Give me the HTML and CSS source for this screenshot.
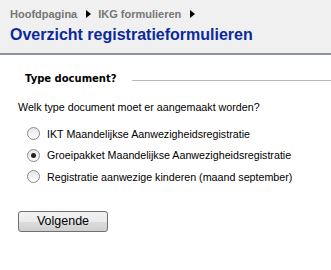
FILE: index.html
```
<!DOCTYPE html>
<html lang="nl">
<head>
    <meta charset="UTF-8">
    <title>Overzicht registratieformulieren</title>
    <link rel="stylesheet" href="styles.css">
</head>
<body>

    <div class="page-header">
        <div class="breadcrumb">
            <a href="#">Hoofdpagina</a>
            <span class="crumb-arrow"></span>
            <a href="#">IKG formulieren</a>
            <span class="crumb-arrow"></span>
        </div>
        <h1 class="page-title">Overzicht registratieformulieren</h1>
    </div>

    <form class="doc-form">
        <div class="section-head">
            <span class="section-title">Type document?</span>
            <span class="section-line"></span>
        </div>

        <p class="question">Welk type document moet er aangemaakt worden?</p>

        <ul class="choice-list">
            <li class="choice">
                <span class="radio"></span>
                <span class="choice-label">IKT Maandelijkse Aanwezigheidsregistratie</span>
            </li>
            <li class="choice">
                <span class="radio checked"></span>
                <span class="choice-label">Groeipakket Maandelijkse Aanwezigheidsregistratie</span>
            </li>
            <li class="choice">
                <span class="radio"></span>
                <span class="choice-label">Registratie aanwezige kinderen (maand september)</span>
            </li>
        </ul>

        <button type="button" class="btn-next">Volgende</button>
    </form>

</body>
</html>
```

FILE: styles.css
```
:root {
    --color-title: #0b2a9c;
    --color-crumb: #777;
    --color-text: #000;
    --font-bold: "DejaVu Sans", Verdana, sans-serif;
    --font-text: "Liberation Sans", Arial, sans-serif;
}

body {
    margin: 0;
    background-color: #fff;
    font-family: var(--font-text);
    color: var(--color-text);
}

/* --- kop --- */
.page-header {
    background-color: #f0f0f0;
    border-bottom: 2px solid #8d939c;
    padding: 7px 10px 9px;
    height: 37px;
}

.breadcrumb {
    display: flex;
    align-items: center;
    font-size: 11px;
    font-weight: bold;
    line-height: 14px;
}

.breadcrumb a {
    color: var(--color-crumb);
    text-decoration: none;
}

.crumb-arrow {
    width: 0;
    height: 0;
    border-top: 4px solid transparent;
    border-bottom: 4px solid transparent;
    border-left: 5px solid #000;
    margin: 0 7px 0 9px;
}

.page-title {
    margin: 4px 0 0;
    font-size: 16px;
    line-height: 20px;
    font-weight: bold;
    color: var(--color-title);
}

/* --- formulier --- */
.doc-form {
    padding: 17px 0 0 18px;
}

.section-head {
    display: flex;
    align-items: center;
    padding-left: 7px;
}

.section-title {
    font-family: var(--font-bold);
    font-size: 10px;
    font-weight: bold;
    line-height: 14px;
}

.section-line {
    flex: 1;
    height: 1px;
    background-color: #b4b9bf;
    margin-left: 15px;
    margin-top: 2px;
}

.question {
    margin: 14px 0 0;
    font-size: 10.7px;
    line-height: 14px;
}

.choice-list {
    list-style: none;
    margin: 9px 0 0;
    padding: 0 0 0 9px;
}

.choice {
    display: flex;
    align-items: center;
    height: 21.5px;
    font-size: 10.7px;
}

.radio {
    width: 11px;
    height: 11px;
    border: 1px solid #8a8a8a;
    border-radius: 50%;
    background: linear-gradient(#e6e6e6, #fff);
    margin-right: 7px;
    position: relative;
    flex-shrink: 0;
}

.radio.checked::after {
    content: "";
    position: absolute;
    left: 3px;
    top: 3px;
    width: 5px;
    height: 5px;
    border-radius: 50%;
    background-color: #222;
}

.btn-next {
    margin-top: 23px;
    width: 90px;
    height: 21px;
    border: 1px solid #707070;
    border-radius: 3px;
    background: linear-gradient(#f2f2f2 0%, #ebebeb 50%, #dddddd 51%, #cfcfcf 100%);
    font-family: var(--font-text);
    font-size: 12.5px;
    color: #000;
    padding: 0;
}
```
